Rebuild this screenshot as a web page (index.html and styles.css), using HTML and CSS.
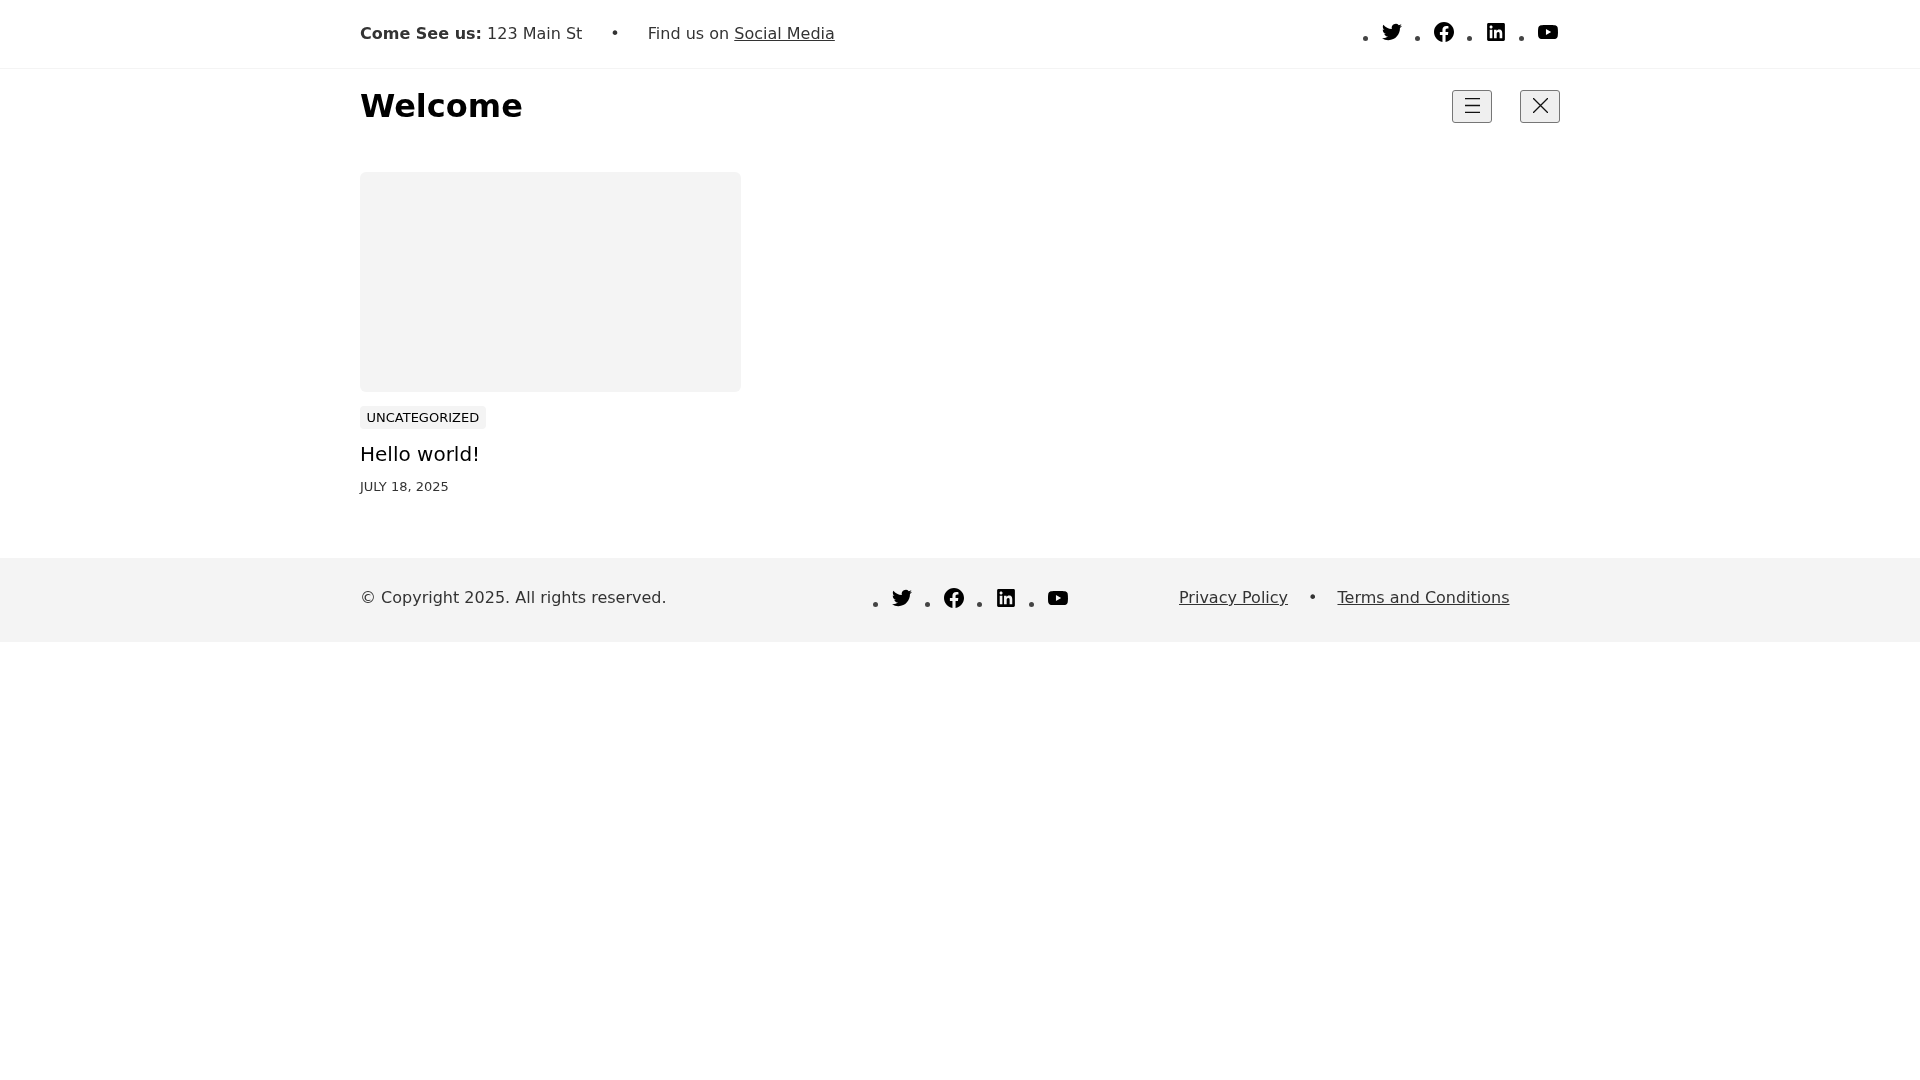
FILE: index.html
```html
<!DOCTYPE html>
<html lang="en">
<head>
    <meta charset="UTF-8">
    <meta name="viewport" content="width=device-width, initial-scale=1.0">
    <title>Welcome</title>
    <link rel="stylesheet" href="styles.css">
</head>
<body>
    <div class="topbar">
        <div class="container topbar-inner">
            <div class="topbar-info">
                <span><strong>Come See us:</strong> 123 Main St</span>
                <span class="bullet">•</span>
                <span>Find us on <a href="#">Social Media</a></span>
            </div>
            <ul class="social">
                <li><a href="#"><svg viewBox="0 0 24 24"><path d="M23.953 4.57a10 10 0 01-2.825.775 4.958 4.958 0 002.163-2.723c-.951.555-2.005.959-3.127 1.184a4.92 4.92 0 00-8.384 4.482C7.69 8.095 4.067 6.13 1.64 3.162a4.822 4.822 0 00-.666 2.475c0 1.71.87 3.213 2.188 4.096a4.904 4.904 0 01-2.228-.616v.06a4.923 4.923 0 003.946 4.827 4.996 4.996 0 01-2.212.085 4.936 4.936 0 004.604 3.417 9.867 9.867 0 01-6.102 2.105c-.39 0-.779-.023-1.17-.067a13.995 13.995 0 007.557 2.209c9.053 0 13.998-7.496 13.998-13.985 0-.21 0-.42-.015-.63A9.935 9.935 0 0024 4.59z"/></svg></a></li>
                <li><a href="#"><svg viewBox="0 0 24 24"><path d="M24 12.073c0-6.627-5.373-12-12-12s-12 5.373-12 12c0 5.99 4.388 10.954 10.125 11.854v-8.385H7.078v-3.47h3.047V9.43c0-3.007 1.792-4.669 4.533-4.669 1.312 0 2.686.235 2.686.235v2.953H15.83c-1.491 0-1.956.925-1.956 1.874v2.25h3.328l-.532 3.47h-2.796v8.385C19.612 23.027 24 18.062 24 12.073z"/></svg></a></li>
                <li><a href="#"><svg viewBox="-1.5 -1.5 27 27"><path d="M20.447 20.452h-3.554v-5.569c0-1.328-.027-3.037-1.852-3.037-1.853 0-2.136 1.445-2.136 2.939v5.667H9.351V9h3.414v1.561h.046c.477-.9 1.637-1.85 3.37-1.85 3.601 0 4.267 2.37 4.267 5.455v6.286zM5.337 7.433c-1.144 0-2.063-.926-2.063-2.065 0-1.138.92-2.063 2.063-2.063 1.14 0 2.064.925 2.064 2.063 0 1.139-.925 2.065-2.064 2.065zm1.782 13.019H3.555V9h3.564v11.452zM22.225 0H1.771C.792 0 0 .774 0 1.729v20.542C0 23.227.792 24 1.771 24h20.451C23.2 24 24 23.227 24 22.271V1.729C24 .774 23.2 0 22.222 0h.003z"/></svg></a></li>
                <li><a href="#"><svg viewBox="0 0 24 24"><path d="M23.498 6.186a3.016 3.016 0 0 0-2.122-2.136C19.505 3.545 12 3.545 12 3.545s-7.505 0-9.377.505A3.017 3.017 0 0 0 .502 6.186C0 8.07 0 12 0 12s0 3.93.502 5.814a3.016 3.016 0 0 0 2.122 2.136c1.871.505 9.376.505 9.376.505s7.505 0 9.377-.505a3.015 3.015 0 0 0 2.122-2.136C24 15.93 24 12 24 12s0-3.93-.502-5.814zM9.545 15.568V8.432L15.818 12l-6.273 3.568z"/></svg></a></li>
            </ul>
        </div>
    </div>

    <header class="container site-header">
        <h1>Welcome</h1>
        <div class="header-buttons">
            <button type="button" aria-label="Menu"><svg viewBox="0 0 14 14"><path d="M0 .5h14M0 7h14M0 13.5h14"/></svg></button>
            <button type="button" aria-label="Close"><svg viewBox="0 0 14 14"><path d="M0 0l14 14M14 0L0 14"/></svg></button>
        </div>
    </header>

    <main class="container">
        <article class="post-card">
            <div class="post-thumb"></div>
            <a class="post-tag" href="#">Uncategorized</a>
            <h2>Hello world!</h2>
            <p class="post-date">July 18, 2025</p>
        </article>
    </main>

    <footer class="site-footer">
        <div class="container footer-inner">
            <p class="copyright">© Copyright 2025. All rights reserved.</p>
            <ul class="social">
                <li><a href="#"><svg viewBox="0 0 24 24"><path d="M23.953 4.57a10 10 0 01-2.825.775 4.958 4.958 0 002.163-2.723c-.951.555-2.005.959-3.127 1.184a4.92 4.92 0 00-8.384 4.482C7.69 8.095 4.067 6.13 1.64 3.162a4.822 4.822 0 00-.666 2.475c0 1.71.87 3.213 2.188 4.096a4.904 4.904 0 01-2.228-.616v.06a4.923 4.923 0 003.946 4.827 4.996 4.996 0 01-2.212.085 4.936 4.936 0 004.604 3.417 9.867 9.867 0 01-6.102 2.105c-.39 0-.779-.023-1.17-.067a13.995 13.995 0 007.557 2.209c9.053 0 13.998-7.496 13.998-13.985 0-.21 0-.42-.015-.63A9.935 9.935 0 0024 4.59z"/></svg></a></li>
                <li><a href="#"><svg viewBox="0 0 24 24"><path d="M24 12.073c0-6.627-5.373-12-12-12s-12 5.373-12 12c0 5.99 4.388 10.954 10.125 11.854v-8.385H7.078v-3.47h3.047V9.43c0-3.007 1.792-4.669 4.533-4.669 1.312 0 2.686.235 2.686.235v2.953H15.83c-1.491 0-1.956.925-1.956 1.874v2.25h3.328l-.532 3.47h-2.796v8.385C19.612 23.027 24 18.062 24 12.073z"/></svg></a></li>
                <li><a href="#"><svg viewBox="-1.5 -1.5 27 27"><path d="M20.447 20.452h-3.554v-5.569c0-1.328-.027-3.037-1.852-3.037-1.853 0-2.136 1.445-2.136 2.939v5.667H9.351V9h3.414v1.561h.046c.477-.9 1.637-1.85 3.37-1.85 3.601 0 4.267 2.37 4.267 5.455v6.286zM5.337 7.433c-1.144 0-2.063-.926-2.063-2.065 0-1.138.92-2.063 2.063-2.063 1.14 0 2.064.925 2.064 2.063 0 1.139-.925 2.065-2.064 2.065zm1.782 13.019H3.555V9h3.564v11.452zM22.225 0H1.771C.792 0 0 .774 0 1.729v20.542C0 23.227.792 24 1.771 24h20.451C23.2 24 24 23.227 24 22.271V1.729C24 .774 23.2 0 22.222 0h.003z"/></svg></a></li>
                <li><a href="#"><svg viewBox="0 0 24 24"><path d="M23.498 6.186a3.016 3.016 0 0 0-2.122-2.136C19.505 3.545 12 3.545 12 3.545s-7.505 0-9.377.505A3.017 3.017 0 0 0 .502 6.186C0 8.07 0 12 0 12s0 3.93.502 5.814a3.016 3.016 0 0 0 2.122 2.136c1.871.505 9.376.505 9.376.505s7.505 0 9.377-.505a3.015 3.015 0 0 0 2.122-2.136C24 15.93 24 12 24 12s0-3.93-.502-5.814zM9.545 15.568V8.432L15.818 12l-6.273 3.568z"/></svg></a></li>
            </ul>
            <div class="footer-links">
                <a href="#">Privacy Policy</a>
                <span class="bullet">•</span>
                <a href="#">Terms and Conditions</a>
            </div>
        </div>
    </footer>
</body>
</html>
```

FILE: styles.css
```css
* {
    box-sizing: border-box;
    margin: 0;
    padding: 0;
}

body {
    background-color: #ffffff;
    color: #333;
    font-family: "DejaVu Sans", sans-serif;
    font-size: 16px;
    line-height: 24px;
    will-change: opacity;
}

a {
    color: inherit;
}

.container {
    width: 1200px;
    margin: 0 auto;
}

.topbar {
    height: 69px;
    border-bottom: 1px solid #f4f4f4;
}

.topbar-inner {
    display: flex;
    justify-content: space-between;
    align-items: center;
    height: 68px;
}

.topbar-info {
    display: flex;
    align-items: center;
}

.bullet {
    margin: 0 28px;
}

.social {
    display: flex;
    list-style: none;
}

.social li {
    display: flex;
    align-items: center;
    margin-left: 11px;
}

.social li::before {
    content: "";
    width: 5px;
    height: 5px;
    margin: 8px 14px 0 0;
    border-radius: 50%;
    background-color: #444;
}

.social a {
    display: block;
    width: 22px;
    height: 20px;
    margin-top: -4px;
    color: #000;
}

.social svg {
    display: block;
    width: 20px;
    height: 20px;
    fill: currentColor;
}

.site-header {
    display: flex;
    justify-content: space-between;
    align-items: center;
    height: 64px;
    padding-top: 10px;
}

h1 {
    font-size: 32px;
    line-height: 40px;
    color: #000;
}

.header-buttons {
    display: flex;
    gap: 28px;
}

.header-buttons button {
    display: flex;
    justify-content: center;
    align-items: center;
    width: 40px;
    height: 33px;
    padding-bottom: 2px;
    border: 1px solid #767676;
    border-radius: 3px;
    background-color: #efefef;
}

.header-buttons svg {
    width: 15px;
    height: 15px;
    fill: none;
    stroke: #111;
    stroke-width: 1.2;
}

main {
    padding-top: 39px;
}

.post-card {
    width: 381px;
}

.post-thumb {
    height: 220px;
    border-radius: 6px;
    background-color: #f4f4f4;
}

.post-tag {
    display: inline-block;
    margin-top: 14px;
    padding: 0 6.5px;
    border-radius: 4px;
    background-color: #f4f4f4;
    color: #000;
    font-size: 13px;
    line-height: 23px;
    text-decoration: none;
    text-transform: uppercase;
}

h2 {
    margin-top: 11px;
    font-size: 20px;
    font-weight: 400;
    line-height: 28px;
    color: #000;
}

.post-date {
    margin-top: 9px;
    font-size: 13px;
    line-height: 20px;
    text-transform: uppercase;
}

.site-footer {
    height: 84px;
    margin-top: 61px;
    background-color: #f4f4f4;
}

.footer-inner {
    display: flex;
    align-items: center;
    height: 80px;
}

.footer-inner .social {
    margin-top: 4px;
}

.copyright {
    width: 502px;
}

.footer-links {
    display: flex;
    margin-left: 109px;
}

.footer-links .bullet {
    margin: 0 20px;
}
```
